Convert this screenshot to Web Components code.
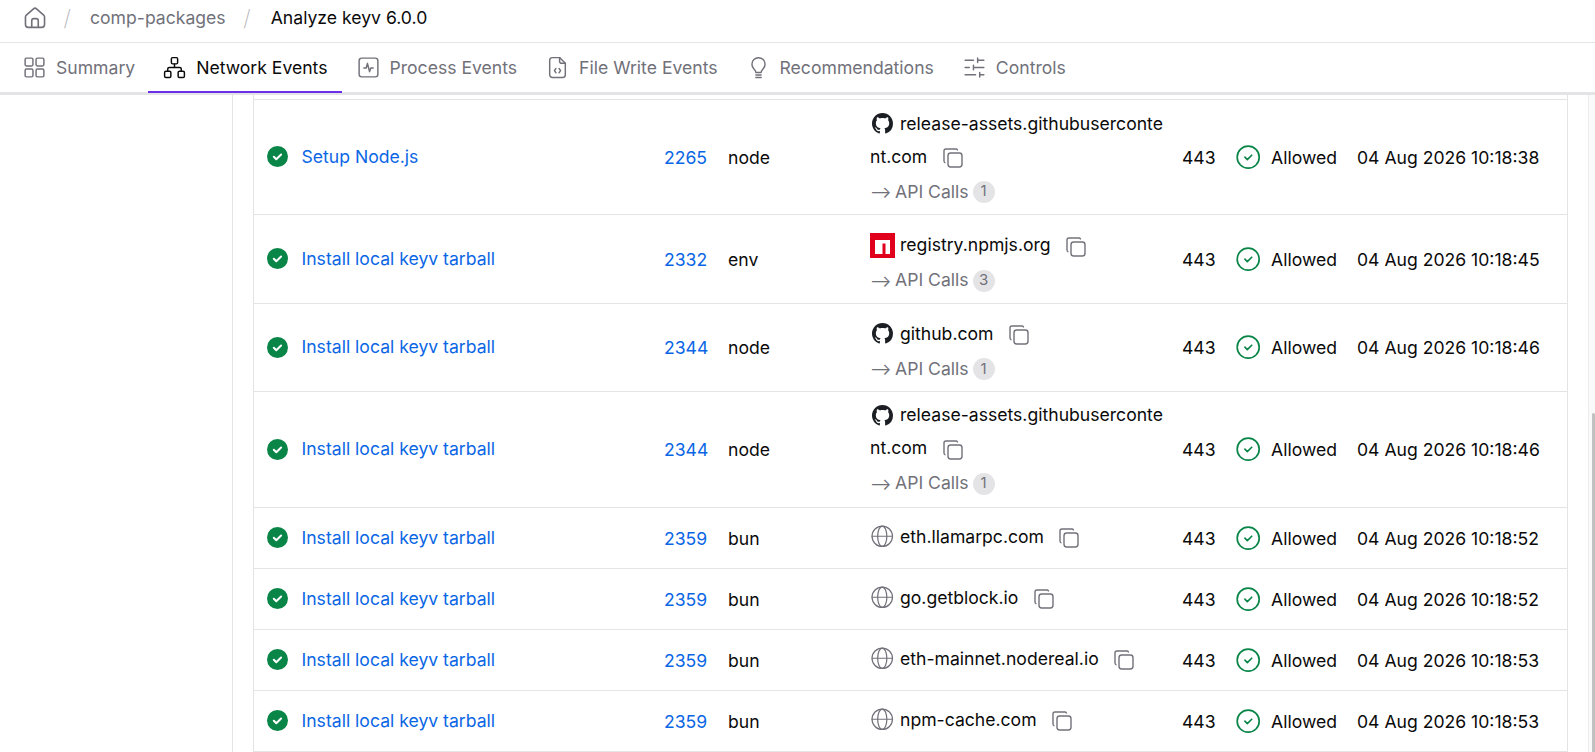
<!DOCTYPE html>
<html lang="en"><head><meta charset="utf-8"><title>Analyze keyv 6.0.0</title>
<style>
html,body{margin:0;padding:0;height:100%;overflow:hidden;background:#fff}
body{font:17.6px/1.5 Inter,"Liberation Sans",sans-serif;color:#0a0a0a}
</style></head><body>
<app-shell>
  <bread-crumbs slot="top" parent="comp-packages" current="Analyze keyv 6.0.0"></bread-crumbs>
  <tab-bar slot="tabs">
    <tab-item icon="grid">Summary</tab-item>
    <tab-item icon="sitemap" active>Network Events</tab-item>
    <tab-item icon="pulse">Process Events</tab-item>
    <tab-item icon="filecode">File Write Events</tab-item>
    <tab-item icon="bulb">Recommendations</tab-item>
    <tab-item icon="sliders">Controls</tab-item>
  </tab-bar>
  <event-table>
    <event-row step="Setup Node.js" pid="2265" proc="node" port="443" time="04 Aug 2026 10:18:38"><domain-cell kind="github" lines="3a" calls="1">release-assets.githubusercontent.com</domain-cell></event-row>
    <event-row step="Install local keyv tarball" pid="2332" proc="env" port="443" time="04 Aug 2026 10:18:45"><domain-cell kind="npm" lines="2" calls="3">registry.npmjs.org</domain-cell></event-row>
    <event-row step="Install local keyv tarball" pid="2344" proc="node" port="443" time="04 Aug 2026 10:18:46"><domain-cell kind="github" lines="2b" calls="1">github.com</domain-cell></event-row>
    <event-row step="Install local keyv tarball" pid="2344" proc="node" port="443" time="04 Aug 2026 10:18:46"><domain-cell kind="github" lines="3" calls="1">release-assets.githubusercontent.com</domain-cell></event-row>
    <event-row step="Install local keyv tarball" pid="2359" proc="bun" port="443" time="04 Aug 2026 10:18:52"><domain-cell kind="globe" lines="1">eth.llamarpc.com</domain-cell></event-row>
    <event-row step="Install local keyv tarball" pid="2359" proc="bun" port="443" time="04 Aug 2026 10:18:52"><domain-cell kind="globe" lines="1">go.getblock.io</domain-cell></event-row>
    <event-row step="Install local keyv tarball" pid="2359" proc="bun" port="443" time="04 Aug 2026 10:18:53"><domain-cell kind="globe" lines="1">eth-mainnet.nodereal.io</domain-cell></event-row>
    <event-row step="Install local keyv tarball" pid="2359" proc="bun" port="443" time="04 Aug 2026 10:18:53"><domain-cell kind="globe" lines="1">npm-cache.com</domain-cell></event-row>
  </event-table>
</app-shell>
<script>
const ICONS={
 home:'<path d="M4 10.200 10.600 4.400a2.200 2.200 0 0 1 2.800 0L20 10.200a2.400 2.400 0 0 1 .8 1.800v7a2.600 2.600 0 0 1-2.600 2.600H5.800A2.600 2.600 0 0 1 3.200 19v-7a2.400 2.400 0 0 1 .8-1.800Z"/><path d="M9 21.500V15.500a2 2 0 0 1 2-2h2a2 2 0 0 1 2 2v6"/>',
 grid:'<rect x="3" y="3" width="7.500" height="7.500" rx="1.300"/><rect x="13.500" y="3" width="7.500" height="7.500" rx="1.300"/><rect x="3" y="13.500" width="7.500" height="7.500" rx="1.300"/><rect x="13.500" y="13.500" width="7.500" height="7.500" rx="1.300"/>',
 sitemap:'<rect x="9" y="2.500" width="6" height="6" rx="1.200"/><rect x="2.500" y="15.500" width="6" height="6" rx="1.200"/><rect x="15.500" y="15.500" width="6" height="6" rx="1.200"/><path d="M5.500 15.500V13.500a1.500 1.500 0 0 1 1.500-1.500h10a1.500 1.500 0 0 1 1.500 1.500v2M12 8.500V12"/>',
 pulse:'<rect x="3" y="3" width="18" height="18" rx="2.500"/><path d="M7.500 12.500h2.300L11 8l2 8 1.200-3.500h2.300"/>',
 filecode:'<path d="M14 2.500H7A2.500 2.500 0 0 0 4.500 5v14A2.500 2.500 0 0 0 7 21.500h10a2.500 2.500 0 0 0 2.500-2.500V8Z"/><path d="M14 2.500V6a2 2 0 0 0 2 2h3.500"/><path d="M10.500 13 9 15l1.500 2M13.500 13l1.500 2-1.500 2"/>',
 bulb:'<path d="M9.500 16.800c0-1.500-.9-2.300-2-3.500a6.300 6.300 0 1 1 9 0c-1.100 1.200-2 2-2 3.500Z"/><path d="M9.500 19.200h5M9.500 21.500h5"/>',
 sliders:'<path d="M3 5h8M15 5h6M15 2.800v4.400M3 12h4M11 12h10M11 9.800v4.400M3 19h10M17 19h4M17 16.800v4.400"/>',
 copy:'<path d="M7 9.667A2.667 2.667 0 0 1 9.667 7h8.666A2.667 2.667 0 0 1 21 9.667v8.666A2.667 2.667 0 0 1 18.333 21H9.667A2.667 2.667 0 0 1 7 18.333Z"/><path d="M4.012 16.737A2.005 2.005 0 0 1 3 15V5c0-1.100.9-2 2-2h10c.75 0 1.158.385 1.500 1"/>',
 globe:'<circle cx="12" cy="12" r="10"/><path d="M2 12h20"/><ellipse cx="12" cy="12" rx="4.500" ry="10"/>',
 okring:'<circle cx="12" cy="12" r="10"/><path d="m9 12 2.200 2.200 4-4"/>'
};
const svg=(n,s,w)=>`<svg viewBox="0 0 24 24" width="${s}" height="${s}" fill="none" stroke="currentColor" stroke-width="${w}" stroke-linecap="round" stroke-linejoin="round" aria-hidden="true">${ICONS[n]}</svg>`;
const GH='<svg viewBox="0 0 16 16" width="21" height="21" fill="#1b1f23" aria-hidden="true"><path d="M8 0C3.58 0 0 3.58 0 8c0 3.540 2.290 6.530 5.470 7.590.4.070.55-.17.55-.38 0-.19-.01-.82-.01-1.490-2.010.37-2.530-.49-2.690-.94-.09-.23-.48-.94-.82-1.130-.28-.15-.68-.52-.01-.53.63-.01 1.080.58 1.230.82.72 1.210 1.870.87 2.330.66.07-.52.28-.87.51-1.070-1.780-.2-3.640-.89-3.640-3.950 0-.87.31-1.590.82-2.150-.08-.2-.36-1.020.08-2.120 0 0 .67-.21 2.200.82.64-.18 1.320-.27 2-.27.68 0 1.360.09 2 .27 1.530-1.040 2.200-.82 2.200-.82.44 1.100.16 1.920.08 2.120.51.56.82 1.270.82 2.150 0 3.070-1.870 3.750-3.650 3.950.29.25.54.73.54 1.480 0 1.070-.01 1.930-.01 2.200 0 .21.15.46.55.38A8.013 8.013 0 0 0 16 8c0-4.420-3.580-8-8-8z"/></svg>';
const NPM='<svg viewBox="0 0 25 25" width="25" height="25" aria-hidden="true"><path fill="#e0001b" d="M0 0h25v25H0z"/><path fill="#fff" d="M5 7h15v14h-4.500V10.500h-3V21H5z"/></svg>';
const def=(name,cls)=>customElements.define(name,cls);
const shadow=(el,html)=>{el.attachShadow({mode:'open'}).innerHTML=html;};

def('app-shell',class extends HTMLElement{connectedCallback(){shadow(this,`<style>
:host{display:flex;flex-direction:column;height:752px;overflow:hidden}
.top{flex:none;height:42px;border-bottom:1px solid #e4e4e7}
.tabs{flex:none;height:49px;border-bottom:3px solid #e4e4e7}
.body{flex:1;min-height:0;display:flex}
.side{flex:none;width:232px;border-right:1px solid #e4e4e7}
.main{flex:1;min-width:0;padding:0 20px;overflow:hidden}
.track{flex:none;width:6px;border-left:1px solid #ececee;background:#fafafa;position:relative}
.thumb{position:absolute;right:0;top:318px;bottom:0;width:3px;background:#c1c1c1;border-radius:2px 2px 0 0}
</style>
<div class="top"><slot name="top"></slot></div>
<div class="tabs"><slot name="tabs"></slot></div>
<div class="body"><div class="side"></div><div class="main"><slot></slot></div><div class="track"><div class="thumb"></div></div></div>`);}});

def('bread-crumbs',class extends HTMLElement{connectedCallback(){shadow(this,`<style>
:host{display:flex;align-items:center;box-sizing:border-box;height:100%;padding:0 0 6px 22px;font-size:17.6px;color:#71717a}
.home{display:flex;width:26px;height:26px;color:#71717a;margin-top:-3px}
.sl{color:#b4b4ba;font-size:22px;font-weight:200;width:0}
.s1{margin-left:15.500px}.s2{margin-left:17.500px}
.a{margin-left:26.500px}.b{margin-left:27.600px;color:#0a0a0a}
span{white-space:nowrap}
</style><span class="home">${svg('home',26,1.5)}</span><span class="sl s1">/</span><span class="a">${this.getAttribute('parent')}</span><span class="sl s2">/</span><span class="b">${this.getAttribute('current')}</span>`);}});

def('tab-bar',class extends HTMLElement{connectedCallback(){shadow(this,`<style>:host{display:flex;height:100%;padding-left:8px}</style><slot></slot>`);}});

def('tab-item',class extends HTMLElement{connectedCallback(){shadow(this,`<style>
:host{display:flex;align-items:center;gap:9px;padding:1px 14px;box-sizing:border-box;color:#71717a;font-size:17.6px;white-space:nowrap;border-bottom:2px solid transparent;height:50px}
:host(:first-child){margin-right:-1px}
:host([active]){color:#0a0a0a;border-bottom-color:#6d2ee8}
span{display:flex}
.t{padding-top:2px}
</style><span>${svg(this.getAttribute('icon'),25,1.4)}</span><span class="t"><slot></slot></span>`);}});

def('event-table',class extends HTMLElement{connectedCallback(){shadow(this,`<style>
:host{display:block;box-sizing:border-box;height:100%;border-left:1px solid #e4e4e7;border-right:1px solid #e4e4e7;padding-top:4px}
.in{border-top:1px solid #e4e4e7}
</style><div class="in"><slot></slot></div>`);}});

def('event-row',class extends HTMLElement{connectedCallback(){const a=n=>this.getAttribute(n);shadow(this,`<style>
:host{display:grid;grid-template-columns:410px 64px 142px 312px 53px 122px 1fr;align-items:center;border-bottom:1px solid #e4e4e7;font-size:17.6px;color:#0a0a0a;white-space:nowrap}
a{color:#0a66e4;text-decoration:none}
.step{display:flex;align-items:center;gap:13.500px;padding-left:13px}
.ok{display:flex;color:#0a8548}
.status{display:flex;align-items:center;height:100%}
.st{display:flex;color:#0a8548;width:36px}
.t{padding-top:2px}
</style>
<div class="step"><span class="ok"><svg viewBox="0 0 21 21" width="21" height="21" aria-hidden="true"><circle cx="10.500" cy="10.500" r="10.500" fill="currentColor"/><path d="m6.800 10.800 2.500 2.500 4.800-4.800" fill="none" stroke="#fff" stroke-width="2" stroke-linecap="round" stroke-linejoin="round"/></svg></span><a href="#">${a('step')}</a></div>
<div class="t"><a href="#">${a('pid')}</a></div>
<div class="t">${a('proc')}</div>
<slot></slot>
<div class="t">${a('port')}</div>
<div class="status"><span class="st">${svg('okring',26.4,1.5)}</span><span class="t">Allowed</span></div>
<div class="t">${a('time')}</div>`);}});

def('domain-cell',class extends HTMLElement{connectedCallback(){const k=this.getAttribute('kind'),c=this.getAttribute('calls');
const ic=k==='github'?GH:k==='npm'?NPM:`<span style="display:flex;color:#71717a">${svg('globe',24.500,1.200)}</span>`;
shadow(this,`<style>
:host{display:block;box-sizing:border-box;width:312px;padding-right:18px;white-space:normal}
:host([lines="1"]){padding-top:12px;padding-bottom:15px}
:host([lines="2"]){padding-top:13.500px;padding-bottom:3.100px}
:host([lines="2b"]){padding-top:13px;padding-bottom:2.600px}
:host([lines="3a"]){padding-top:6.500px;padding-bottom:3.100px}
:host([lines="3"]){padding-top:6.500px;padding-bottom:4.100px}
.d{line-height:33px;word-break:break-all;color:#0a0a0a}
.i{display:inline-flex;width:25px;height:25px;align-items:center;justify-content:center;vertical-align:middle;margin-right:5px;margin-top:-3px}
.c{display:inline-flex;vertical-align:middle;margin-left:13.500px;color:#71717a;margin-top:0}
.api{display:flex;align-items:center;height:38.400px;color:#71717a;white-space:nowrap}
.ar{display:inline-block;width:25px;font-size:16px;overflow:hidden}
.b{display:inline-flex;align-items:center;justify-content:center;width:22px;height:22px;margin-left:4px;border-radius:50%;background:#e4e4e7;font-size:15px;color:#71717a}
</style>
<div class="d"><span class="i">${ic}</span><slot></slot><span class="c">${svg('copy',24,1.4)}</span></div>
${c?`<div class="api"><span class="ar">⟶</span><span>API Calls</span><span class="b">${c}</span></div>`:''}`);}});
</script>
</body></html>
